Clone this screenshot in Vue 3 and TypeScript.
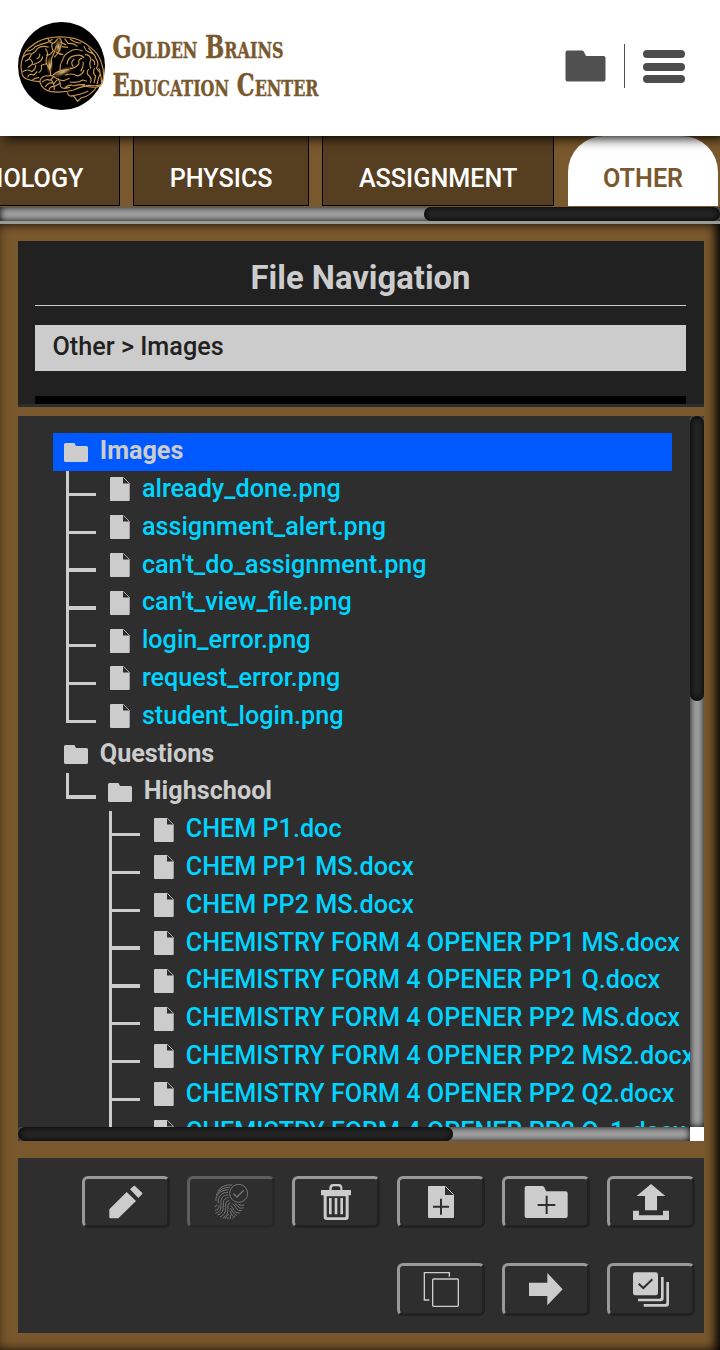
<script setup lang="ts">
interface Node { name: string; level: number; folder?: boolean; selected?: boolean; last?: boolean }
interface Tool { id: string; box: string; disabled?: boolean }

const tabs: string[] = ['BIOLOGY', 'PHYSICS', 'ASSIGNMENT', 'OTHER']

const nodes: Node[] = [
  { name: 'Images', level: 0, folder: true, selected: true },
  { name: 'already_done.png', level: 1 },
  { name: 'assignment_alert.png', level: 1 },
  { name: "can't_do_assignment.png", level: 1 },
  { name: "can't_view_file.png", level: 1 },
  { name: 'login_error.png', level: 1 },
  { name: 'request_error.png', level: 1 },
  { name: 'student_login.png', level: 1, last: true },
  { name: 'Questions', level: 0, folder: true },
  { name: 'Highschool', level: 1, folder: true, last: true },
  { name: 'CHEM P1.doc', level: 2 },
  { name: 'CHEM PP1 MS.docx', level: 2 },
  { name: 'CHEM PP2 MS.docx', level: 2 },
  { name: 'CHEMISTRY FORM 4 OPENER PP1 MS.docx', level: 2 },
  { name: 'CHEMISTRY FORM 4 OPENER PP1 Q.docx', level: 2 },
  { name: 'CHEMISTRY FORM 4 OPENER PP2 MS.docx', level: 2 },
  { name: 'CHEMISTRY FORM 4 OPENER PP2 MS2.docx', level: 2 },
  { name: 'CHEMISTRY FORM 4 OPENER PP2 Q2.docx', level: 2 },
  { name: 'CHEMISTRY FORM 4 OPENER PP2 Q_1.docx', level: 2 },
]

const toolRows: Tool[][] = [
  [
    { id: 'edit', box: '255 297 246 138' },
    { id: 'verify', box: '570 297 246 138', disabled: true },
    { id: 'delete', box: '885 297 246 138' },
    { id: 'newFile', box: '120 297 246 138' },
    { id: 'newFolder', box: '435 297 246 138' },
    { id: 'upload', box: '750 297 246 138' },
  ],
  [
    { id: 'copy', box: '120 558 246 138' },
    { id: 'move', box: '435 558 246 138' },
    { id: 'selectAll', box: '750 558 246 138' },
  ],
]
</script>

<template>
  <div class="page">
    <header class="header">
      <svg class="logo" viewBox="24 21 261 264">
        <defs>
          <radialGradient id="glow"><stop offset="0" stop-color="#ffdf9a" stop-opacity=".9" /><stop offset="1" stop-color="#a8702a" stop-opacity="0" /></radialGradient>
        </defs>
        <ellipse cx="154.500" cy="153" rx="130.500" ry="132" fill="#000" />
        <g class="brain">
          <path d="M90 200Q70 200 52 193Q35 187 35 168Q30 150 38 128Q43 107 65 93Q82 77 110 70Q150 61 192 70Q222 80 242 98Q269 118 276 150Q285 178 277 205Q272 215 235 211Q210 216 190 225Q160 234 122 230Q96 223 90 202Q88 189 105 183L127 182" />
          <path d="M172 232Q176 247 190 242Q197 252 203 259L213 249Q243 243 262 213M217 211Q250 222 274 212M180 243Q212 240 235 228" />
          <path d="M37 128Q52 113 65 117Q77 112 82 101Q96 90 116 97M49 108Q69 107 75 95Q92 87 111 83L128 73M64 118Q60 133 45 139M58 132Q69 137 67 148L53 158M38 170Q54 160 65 170Q78 162 77 150M53 187Q57 174 72 180L82 169M66 196Q76 187 88 188M80 132Q91 127 89 116M69 149L83 143Q96 138 98 124M86 173Q97 167 94 151L109 146" />
          <path d="M114 71Q119 87 132 84L145 70M128 83Q122 94 130 107Q120 123 108 120M106 101Q116 112 111 125Q104 141 114 154Q124 166 121 181M139 92Q134 113 124 132Q127 149 118 166M148 69Q158 77 153 91L146 111L133 127M150 81L169 90M137 110L153 119M164 71L175 86Q189 82 202 94M180 72Q201 87 214 83M155 95L174 97M147 116L160 119" />
          <path d="M127 182Q145 164 176 164M151 168Q148 149 158 135Q160 119 179 110Q195 98 218 108M171 148Q173 126 194 122Q215 117 222 129M190 155Q179 142 193 132M179 161Q198 160 207 146Q203 131 217 130M222 93Q225 108 239 112Q256 116 258 132M235 98L250 116M225 119Q240 119 243 133Q236 148 243 161M258 131Q269 147 259 159L269 172M246 134Q255 136 254 150" />
          <path d="M127 182Q145 197 161 197L179 190M165 181Q186 172 202 183Q218 179 222 165M179 201Q204 205 218 195L231 199M188 213Q209 208 225 209M212 169Q222 153 219 140M236 162Q226 176 238 183Q247 192 241 204M254 159Q246 174 257 183L252 204M266 159Q275 174 266 187L261 208M272 177L275 204" />
          <path d="M96 202Q108 190 120 196L130 186M106 216Q115 199 132 205L142 194M117 225Q120 213 134 214L151 205L144 190M123 193Q136 211 132 225M151 205Q148 218 163 220L180 217M164 220Q174 208 188 211" />
        </g>
        <ellipse cx="145" cy="95" rx="12" ry="27" fill="url(#glow)" /><ellipse cx="119" cy="151" rx="11" ry="29" fill="url(#glow)" />
        <ellipse cx="158" cy="171" rx="39" ry="12" fill="url(#glow)" transform="rotate(-23 158 171)" />
      </svg>
      <svg class="brand" viewBox="0 0 220 80">
        <text x="0.500" y="35.500" textLength="171" lengthAdjust="spacingAndGlyphs">Golden Brains</text>
        <text x="0.500" y="73.500" textLength="206" lengthAdjust="spacingAndGlyphs">Education Center</text>
      </svg>
      <svg class="head-folder" viewBox="0 0 41 32"><path d="M2.500 .5H17Q19 .5 19.500 3L21 6H38.500Q40.500 6 40.500 8V29.500Q40.500 31.500 38.500 31.500H2.500Q.5 31.500 .5 29.500V2.500Q.5 .5 2.500 .5Z" /></svg>
      <span class="divider"></span>
      <div class="burger"><i></i><i></i><i></i></div>
    </header>

    <nav class="tabs">
      <span v-for="t in tabs" :key="t" class="tab" :class="{ active: t === 'OTHER' }">{{ t }}</span>
    </nav>
    <div class="tabs-track"><div class="thumb"></div></div>

    <main class="main">
      <section class="navigation">
        <h1>File Navigation</h1>
        <div class="crumbs">Other &gt; Images</div>
        <div class="strip"></div>
      </section>

      <section class="browser">
        <div class="tree">
          <div v-for="n in nodes" :key="n.name" class="row" :class="['level' + n.level, { selected: n.selected, folder: n.folder }]">
            <span v-if="n.level" class="branch" :class="{ last: n.last }"><i class="stem"></i><i class="arm"></i></span>
            <svg v-if="n.folder" class="folder-icon" viewBox="0 0 24 19"><path d="M1.500 0H10.500L12 3H22.500Q24 3 24 4.500V17.500Q24 19 22.500 19H1.500Q0 19 0 17.500V1.500Q0 0 1.500 0Z" /></svg>
            <svg v-else class="file-icon" viewBox="0 0 20 24"><path d="M1 0H13V6.500H19.700V23Q19.700 24 18.700 24H1Q0 24 0 23V1Q0 0 1 0Z" /><path class="fold" d="M13.300 .3L19.600 6.600" /></svg>
            <span class="label">{{ n.name }}</span>
          </div>
        </div>
        <div class="track-y"><div class="thumb"></div></div>
        <div class="track-x"><div class="thumb"></div></div>
        <div class="corner"></div>
      </section>

      <section class="toolbar">
        <div v-for="(r, i) in toolRows" :key="i" class="tools">
          <button v-for="t in r" :key="t.id" :class="{ disabled: t.disabled }" :aria-label="t.id">
            <svg :viewBox="t.box">
              <template v-if="t.id === 'edit'">
                <path d="M380 336L408 363L355 415H331Q328 415 328 412V388Z" /><path d="M390 328L401 318Q403 316 405 318L427 339Q428 341 426 343L415 354Z" />
              </template>
              <g v-else-if="t.id === 'verify'" class="line">
                <circle cx="716" cy="340" r="27" /><path d="M700 341L711 351L731 331" stroke-width="4" />
                <path d="M653 334Q667 312 697 315M648 345Q665 320 690 322M648 363V354Q655 330 686 329M655 370V358Q661 336 684 337M644 380Q650 380 650 374M645 391Q657 390 657 376M646 400Q663 397 663 377V361Q666 345 685 345M653 405Q671 400 670 378V367Q671 354 686 353M660 411Q677 404 677 383V371Q678 362 688 362M668 415Q685 406 684 386V376Q684 368 692 369M677 417V412Q683 405 687 402M684 418V411M691 384Q698 401 711 407M691 393Q692 408 705 412M691 405V417M698 416V413M692 376Q699 384 701 390Q706 399 719 400M698 371Q707 378 709 386Q714 393 725 392M704 371Q714 376 717 383Q724 387 731 383M715 373Q724 378 733 375" />
              </g>
              <g v-else-if="t.id === 'delete'">
                <path d="M963 330H988V322Q990 312 999 312H1017Q1025 312 1027 322V330H1053V346H963ZM995 330H1021V325Q1020 319 1015 319H1001Q996 319 995 325Z" fill-rule="evenodd" />
                <path d="M971 344H1046V411Q1046 420 1038 420H980Q971 420 971 411ZM980 349V409Q980 412 983 412H1034Q1037 412 1037 409V349Z" fill-rule="evenodd" />
                <path d="M987 354H995V403H987ZM1004 354H1012V403H1004ZM1021 354H1029V403H1021Z" />
              </g>
              <g v-else-if="t.id === 'newFile'">
                <path d="M206 318H255V345H282V411Q282 414 279 414H207Q204 414 204 411V320Q204 318 206 318Z" /><path class="line" d="M256 319L281 344" /><path class="cut" d="M243 356V404M219 380H267" />
              </g>
              <g v-else-if="t.id === 'newFolder'">
                <path d="M500 318H547Q552 318 554 324L558 334H617Q623 334 623 340V408Q623 414 617 414H500Q494 414 494 408V324Q494 318 500 318Z" /><path class="cut" d="M560 347V402M533 375H586" />
              </g>
              <path v-else-if="t.id === 'upload'" d="M873 312L916 348H891V391H855V348H830ZM819 392H837V406H909V392H927V420H819Z" />
              <g v-else-if="t.id === 'copy'" class="line outline">
                <path d="M208 660H193V578H268V590" /><rect x="218" y="597" width="77" height="82" rx="3" />
              </g>
              <path v-else-if="t.id === 'move'" d="M507 608H562V579L608 628L562 676V648H507Z" />
              <g v-else>
                <rect x="819" y="577" width="75" height="69" rx="7" /><path class="cut" d="M836 611L850 624L877 598" />
                <path d="M903 591H911V655Q911 664 902 664H834V656H899Q903 656 903 652ZM919 606H927V672Q927 680 918 680H851V672H915Q919 672 919 668Z" />
              </g>
            </svg>
          </button>
        </div>
      </section>
    </main>
  </div>
</template>

<style>
body { margin: 0; overflow: hidden; }
</style>

<style scoped>
* { box-sizing: border-box; }
.page { position: relative; width: 720px; height: 1350px; overflow: hidden; background: #7a582d; font: 500 25.2px Roboto, sans-serif; color: #ccc; }
.header { position: relative; z-index: 3; height: 136px; background: #fff; display: flex; align-items: flex-start; padding: 22px 35px 0 18px; box-shadow: 5px 2px 11px #000; }
.logo { width: 87px; height: 88px; flex: none; }
.brain { fill: none; stroke: #cb994f; stroke-width: 3.400; stroke-linejoin: round; }
.brand { width: 220px; height: 80px; margin: 0 0 0 7px; flex: none; overflow: visible; fill: #7a582d; stroke: #7a582d; stroke-width: .4px; font: bold 31px "DejaVu Serif Condensed", "DejaVu Serif", serif; font-variant: small-caps; }
.head-folder { width: 41px; height: 32px; margin: 28px 18px 0 auto; fill: #505050; }
.divider { width: 1px; height: 44px; margin: 22px 18px 0 0; background: #505050; }
.burger { width: 42px; height: 33px; margin-top: 28px; display: flex; flex-direction: column; justify-content: space-between; }
.burger i { height: 8px; border-radius: 4px; background: #4d4d4d; }
.tabs { height: 71px; display: flex; justify-content: flex-end; gap: 13.300px; padding: 0 2px 1px 0; }
.tab { flex: none; height: 70px; padding: 0 35.500px; border: 1px solid #000; border-top: 0; background: #563e20; color: #fff; line-height: 86px; }
.tab.active { width: 150px; margin-left: .8px; background: #fff; color: #7a582d; border: 0; padding: 0; text-align: center; font-weight: 600; border-radius: 36px 36px 0 0; }
.tabs-track { height: 17px; background: #a3a3a3; border-bottom: 3px solid #989b96; box-shadow: inset 0 0 7px #000; position: relative; z-index: 2; }
.tabs-track .thumb { width: 296px; height: 14px; margin-left: auto; }
.thumb { border-radius: 7px; background: #252525; box-shadow: inset 0 0 7px #000; }
.main { height: 1126px; padding: 17px 16px 0 18px; box-shadow: inset -6px 0 11px -2px #000, inset 0 0 11px rgba(0,0,0,.35); }
.navigation { height: 166px; background: #212121; border-bottom: 3px solid #2e2e2e; padding: 17px 18px 0 17px; }
h1 { margin: 0; height: 48px; border-bottom: 1px solid #ccc; font-size: 32.800px; font-weight: 700; line-height: 41px; text-align: center; }
.crumbs { height: 46px; margin-top: 19px; padding-left: 17.500px; background: #ccc; color: #212121; line-height: 43px; }
.strip { height: 8px; margin-top: 25px; background: #000; }
.browser { height: 725px; margin-top: 9px; display: grid; grid-template: 711px 14px / 672px 14px; }
.tree { min-width: 0; overflow: hidden; background: #2e2e2e; padding: 17px 18px 0 35px; }
.row { height: 37.800px; display: flex; align-items: flex-start; padding-left: 11px; white-space: nowrap; color: #00d4ff; }
.selected { background: #0059ff; }
.folder { color: #ccc; font-weight: 700; }
.level1 { padding-left: 13px; }
.level2 { padding-left: 56.300px; }
.branch { flex: none; width: 30px; height: 37.800px; margin-right: 14px; display: grid; grid-template-columns: 3px 27px; grid-template-rows: 22px 3.400px 1fr; }
.level1.folder .branch { margin-right: 12px; }
.level2 .branch { width: 30.500px; grid-template-columns: 3px 27.500px; margin-right: 14px; }
.stem { grid-row: 1 / 4; background: #ccc; }
.last .stem { grid-row: 1 / 3; }
.arm { grid-row: 2; grid-column: 2; background: #ccc; }
.folder-icon { flex: none; width: 24px; height: 19px; margin: 9.700px 11.800px 0 0; fill: #ccc; }
.file-icon { flex: none; width: 20px; height: 24px; margin: 6.700px 11.900px 0 0; fill: #ccc; }
.fold { stroke: #ccc; stroke-width: .8; fill: none; }
.label { margin-top: .2px; line-height: 36.800px; }
.track-y { background: #a3a3a3; box-shadow: inset 0 0 7px #000; }
.track-y .thumb { height: 285px; }
.track-x { background: #a3a3a3; box-shadow: inset 0 0 7px #000; }
.track-x .thumb { width: 435px; height: 14px; }
.corner { background: #fff; }
.toolbar { height: 175px; margin-top: 17px; padding: 18px 9.300px 0 0; background: #2e2e2e; }
.tools { display: flex; justify-content: flex-end; gap: 17.300px; height: 87.300px; }
button { width: 87.700px; height: 52.300px; padding: 0; background: none; border: 3px solid; border-color: #999 #222 #222 #999; border-radius: 6px; display: flex; }
button svg { width: 82px; height: 46px; flex: none; fill: #ccc; }
.disabled { opacity: .45; }
.line { fill: none; stroke: #ccc; stroke-width: 3; }
.outline { stroke-width: 4; }
.cut { fill: none; stroke: #2e2e2e; stroke-width: 6; }
</style>
